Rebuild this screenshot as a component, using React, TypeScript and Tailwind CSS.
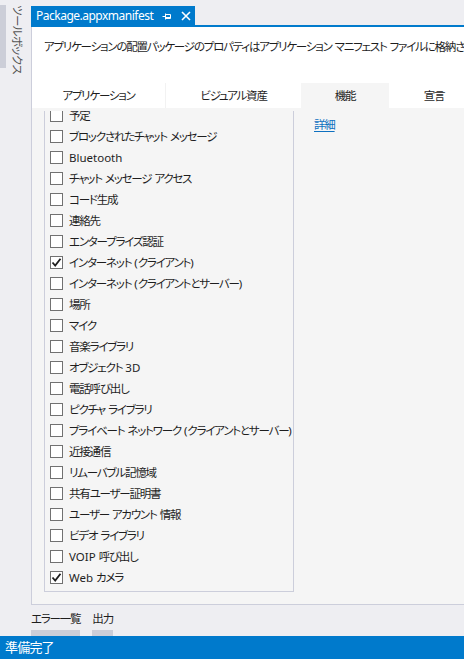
import React from 'react';

const FONT = "font-['Noto_Sans','Noto_Sans_CJK_JP',sans-serif] [font-feature-settings:'palt']";

const CAPABILITIES: { label: string; checked?: boolean }[] = [
  { label: '予定' },
  { label: 'ブロックされたチャット メッセージ' },
  { label: 'Bluetooth' },
  { label: 'チャット メッセージ アクセス' },
  { label: 'コード生成' },
  { label: '連絡先' },
  { label: 'エンタープライズ認証' },
  { label: 'インターネット (クライアント)', checked: true },
  { label: 'インターネット (クライアントとサーバー)' },
  { label: '場所' },
  { label: 'マイク' },
  { label: '音楽ライブラリ' },
  { label: 'オブジェクト 3D' },
  { label: '電話呼び出し' },
  { label: 'ピクチャ ライブラリ' },
  { label: 'プライベート ネットワーク (クライアントとサーバー)' },
  { label: '近接通信' },
  { label: 'リムーバブル記憶域' },
  { label: '共有ユーザー証明書' },
  { label: 'ユーザー アカウント 情報' },
  { label: 'ビデオ ライブラリ' },
  { label: 'VOIP 呼び出し' },
  { label: 'Web カメラ', checked: true },
];

const TABS = [
  { label: 'アプリケーション', w: 'w-[134px]' },
  { label: 'ビジュアル資産', w: 'w-[135px]' },
  { label: '機能', w: 'w-[88px]', active: true },
  { label: '宣言', w: 'w-[90px]' },
];

// Japanese runs are set tighter than Latin ones, to get close to Yu Gothic UI widths
function T({ text }: { text: string }) {
  const parts = text.split(/([\x20-\x7e]+)/).filter(Boolean);
  return (
    <>
      {parts.map((p, i) =>
        /^[\x20-\x7e]+$/.test(p) ? (
          <span key={i} className="whitespace-pre">{p}</span>
        ) : (
          <span key={i} className="tracking-[-1.2px]">{p}</span>
        ),
      )}
    </>
  );
}

function Checkbox({ checked }: { checked?: boolean }) {
  return (
    <span className="w-[13px] h-[13px] shrink-0 border border-[#717171] bg-white flex items-center justify-center">
      {checked && (
        <svg width="11" height="11" viewBox="0 0 11 11">
          <path d="M1.5 5.5 L4.2 8.5 L9.5 1.8" fill="none" stroke="#1e1e1e" strokeWidth="1.8" />
        </svg>
      )}
    </span>
  );
}

export default function App() {
  return (
    <div className={`w-[464px] h-[659px] bg-[#eeeef2] flex flex-col overflow-hidden text-[#1e1e1e] text-[11.5px] ${FONT}`}>
      <div className="h-[605px] flex">
        {/* toolbox auto-hide strip */}
        <div className="w-[31px] shrink-0 flex items-start pt-[5px]">
          <div className="w-[6px] h-[63px] bg-[#ccced8]" />
          <div className="ml-[5px] [writing-mode:vertical-rl] [text-orientation:sideways] leading-[12px] text-[#555] tracking-[-0.6px]">
            ツールボックス
          </div>
        </div>

        {/* document */}
        <div className="flex-1 min-w-0 flex flex-col pt-[6px]">
          <div className="h-[19px] flex">
            <div className="w-[164px] bg-[#007acc] text-white flex items-center pl-[5px] text-[12px]">
              <span className="tracking-[-0.5px]">Package.appxmanifest</span>
              <svg className="ml-auto" width="10" height="10" viewBox="0 0 10 10">
                <path d="M0.5 5.5H3.5 M3.5 2.5V8.5 M3.5 3.5H8.5V7.5H3.5 M3.5 6.5H8.5" fill="none" stroke="#fff" strokeWidth="1" />
              </svg>
              <svg className="ml-[9px] mr-[4px]" width="10" height="10" viewBox="0 0 10 10">
                <path d="M1 1L9 9M9 1L1 9" stroke="#fff" strokeWidth="1.6" />
              </svg>
            </div>
          </div>
          <div className="h-[2px] bg-[#007acc]" />

          <div className="flex-1 flex flex-col border-l border-b border-[#cccedb] bg-white min-h-0">
            <div className="h-[56px] pl-[12px] pt-[12px] leading-[16px] whitespace-nowrap overflow-hidden">
              <T text="アプリケーションの配置パッケージのプロパティはアプリケーション マニフェスト ファイルに格納されています。" />
            </div>
            <div className="h-[25px] flex">
              {TABS.map((t, i) => (
                <div
                  key={t.label}
                  className={`${t.w} shrink-0 flex items-center justify-center ${t.active ? 'bg-[#f5f5f5]' : ''} ${i === 0 ? 'border-r border-[#f2f2f2]' : ''}`}
                >
                  <T text={t.label} />
                </div>
              ))}
            </div>

            <div className="flex-1 bg-[#f5f5f5] flex pl-[12px] pt-[3px] pb-[12px] min-h-0">
              <div className="w-[250px] shrink-0 border-l border-r border-b border-[#cccedb] overflow-hidden">
                <div className="-mt-[6px]">
                  {CAPABILITIES.map((c) => (
                    <div key={c.label} className="h-[21px] flex items-center pl-[5px] gap-[6px] whitespace-nowrap">
                      <Checkbox checked={c.checked} />
                      <span>
                        <T text={c.label} />
                      </span>
                    </div>
                  ))}
                </div>
              </div>
              <div className="ml-[20px] pt-[6px] leading-[16px]">
                <span className="text-[#0e70c0] underline underline-offset-2">
                  <T text="詳細" />
                </span>
              </div>
            </div>
          </div>
        </div>
      </div>

      {/* tool window tabs */}
      <div className="h-[31px] flex items-end gap-[12px] pl-[31px] leading-[16px]">
        <div className="flex flex-col">
          <span className="mb-[3px]">
            <T text="エラー一覧" />
          </span>
          <div className="h-[6px] bg-[#ccced8]" />
        </div>
        <div className="flex flex-col">
          <span className="mb-[3px]">
            <T text="出力" />
          </span>
          <div className="h-[6px] bg-[#ccced8]" />
        </div>
      </div>

      {/* status bar */}
      <div className="h-[23px] bg-[#007acc] text-white text-[13px] flex items-center pl-[5px] tracking-[-0.8px]">準備完了</div>
    </div>
  );
}
